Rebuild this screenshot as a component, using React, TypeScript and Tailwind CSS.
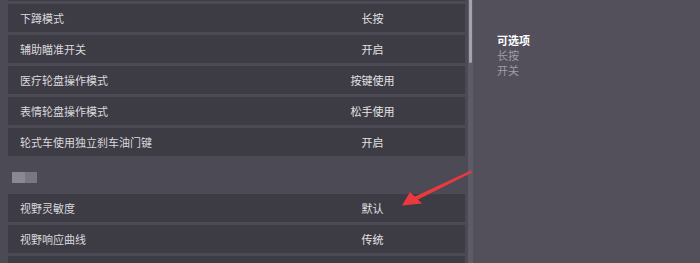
import React from 'react';

type Row = { label: string; value: string };

const topRows: Row[] = [
  { label: '下蹲模式', value: '长按' },
  { label: '辅助瞄准开关', value: '开启' },
  { label: '医疗轮盘操作模式', value: '按键使用' },
  { label: '表情轮盘操作模式', value: '松手使用' },
  { label: '轮式车使用独立刹车油门键', value: '开启' },
];

const bottomRows: Row[] = [
  { label: '视野灵敏度', value: '默认' },
  { label: '视野响应曲线', value: '传统' },
  { label: '', value: '' },
];

const SettingRow: React.FC<Row> = ({ label, value }) => (
  <div className="flex h-[28px] shrink-0 items-center bg-[#3d3b44] text-[11px] leading-none">
    <span className="flex-1 pl-3 text-[#d9d9de]">{label}</span>
    <span className="w-[185px] text-center text-[#e2e2e6]">{value}</span>
  </div>
);

export default function App() {
  return (
    <div
      className="relative flex h-[263px] w-[700px] overflow-hidden bg-[#53505c]"
      style={{ fontFamily: '"Noto Sans CJK SC", "Noto Sans", sans-serif' }}
    >
      {/* settings list */}
      <div className="flex w-[468px] shrink-0 flex-col gap-[3px] overflow-hidden bg-[#4c4a55] pl-2 pr-[3px]">
        <div className="h-[1px] shrink-0 bg-[#3d3b44]" />
        {topRows.map((r) => (
          <SettingRow key={r.label} {...r} />
        ))}
        <div className="h-[32px] shrink-0 pl-1 pt-[13px]">
          <div className="flex h-[11px]">
            <div className="w-[13px] bg-[#8a8893]" />
            <div className="w-[12px] bg-[#797782]" />
          </div>
        </div>
        {bottomRows.map((r, i) => (
          <SettingRow key={i} {...r} />
        ))}
      </div>

      {/* scrollbar */}
      <div className="flex w-[5px] shrink-0 justify-center bg-[#5d5b67]">
        <div className="h-[63px] w-[3px] rounded-b-sm bg-[#a4a3ac]" />
      </div>

      {/* detail panel */}
      <div className="flex-1 pl-[24px] pt-[33px] text-[11px] leading-[15px]">
        <div className="font-bold text-white">可选项</div>
        <div className="text-[#9f9da8]">长按</div>
        <div className="text-[#9f9da8]">开关</div>
      </div>

      {/* annotation arrow */}
      <svg className="pointer-events-none absolute inset-0" width="700" height="263" viewBox="0 0 700 263">
        <polygon points="471,170.5 472,172.5 416,200.5 414,197" fill="#ea3a3e" />
        <polygon points="402,205.5 410,192 422,203.5" fill="#ea3a3e" />
      </svg>
    </div>
  );
}
